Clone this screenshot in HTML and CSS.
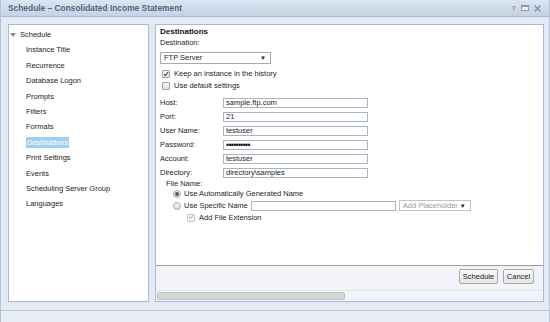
FILE: index.html
```html
<!DOCTYPE html>
<html lang="en">
<head>
    <meta charset="UTF-8">
    <title>Schedule</title>
    <link rel="stylesheet" href="styles.css">
</head>
<body>
    <div class="window">
        <div class="titlebar">
            <span class="title">Schedule &ndash; Consolidated Income Statement</span>
            <div class="tools">
                <span class="tool help">?</span>
                <span class="tool min"></span>
                <svg class="tool close" width="7" height="7" viewBox="0 0 7 7">
                    <path d="M0.5 0.5 L6.5 6.5 M6.5 0.5 L0.5 6.5" stroke="#8e9aab" stroke-width="1.6"/>
                </svg>
            </div>
        </div>

        <div class="main">
            <div class="nav">
                <div class="nav-root"><span class="caret"></span>Schedule</div>
                <ul class="nav-list">
                    <li>Instance Title</li>
                    <li>Recurrence</li>
                    <li>Database Logon</li>
                    <li>Prompts</li>
                    <li>Filters</li>
                    <li>Formats</li>
                    <li><span class="selected">Destinations</span></li>
                    <li>Print Settings</li>
                    <li>Events</li>
                    <li>Scheduling Server Group</li>
                    <li>Languages</li>
                </ul>
            </div>

            <div class="panel">
                <div class="content">
                    <div class="heading">Destinations</div>
                    <div class="line">Destination:</div>
                    <div class="select wide">
                        <span>FTP Server</span>
                        <span class="arrow">&#9660;</span>
                    </div>

                    <div class="check-row first">
                        <span class="box checked">
                            <svg width="8" height="8" viewBox="0 0 8 8"><path d="M1.5 4 L3.2 6 L6.8 1.5" fill="none" stroke="#444" stroke-width="1.4"/></svg>
                        </span>
                        Keep an instance in the history
                    </div>
                    <div class="check-row">
                        <span class="box"></span>
                        Use default settings
                    </div>

                    <div class="fields">
                        <label>Host:</label><div class="input">sample.ftp.com</div>
                        <label>Port:</label><div class="input">21</div>
                        <label>User Name:</label><div class="input">testuser</div>
                        <label>Password:</label><div class="input dots">&bull;&bull;&bull;&bull;&bull;&bull;&bull;&bull;&bull;&bull;</div>
                        <label>Account:</label><div class="input">testuser</div>
                        <label>Directory:</label><div class="input">directory\samples</div>
                    </div>

                    <div class="file-name">
                        <div class="file-label">File Name:</div>
                        <div class="radio-row auto">
                            <span class="radio on"></span>
                            Use Automatically Generated Name
                        </div>
                        <div class="radio-row specific">
                            <span class="radio"></span>
                            Use Specific Name
                            <div class="input name-input"></div>
                            <div class="select placeholder">
                                <span>Add Placeholder</span>
                                <span class="arrow">&#9660;</span>
                            </div>
                        </div>
                        <div class="check-row ext">
                            <span class="box disabled">
                                <svg width="8" height="8" viewBox="0 0 8 8"><path d="M1.5 4 L3.2 6 L6.8 1.5" fill="none" stroke="#a8a8a8" stroke-width="1.3"/></svg>
                            </span>
                            Add File Extension
                        </div>
                    </div>
                </div>

                <div class="footer">
                    <button class="btn schedule">Schedule</button>
                    <button class="btn cancel">Cancel</button>
                </div>

                <div class="hscroll">
                    <div class="thumb"></div>
                </div>
            </div>
        </div>

        <div class="status">
            <span class="grip"></span>
        </div>
    </div>
</body>
</html>
```

FILE: styles.css
```css
* {
    box-sizing: border-box;
}

body {
    margin: 0;
    font-family: 'Liberation Sans', Arial, sans-serif;
    font-size: 7.5px;
    color: #1e1e1e;
    background: #e4eaf4;
}

.window {
    width: 550px;
    height: 322px;
    display: flex;
    flex-direction: column;
    background: #e4eaf4;
    border-left: 1px solid #b3c2d8;
    border-right: 1px solid #b3c2d8;
}

/* title bar */
.titlebar {
    height: 17px;
    display: flex;
    align-items: center;
    justify-content: space-between;
    padding: 0 8px 0 7px;
    background: linear-gradient(to bottom, #dde5f0, #c4d2e4);
    border-bottom: 1px solid #a9b9d0;
}

.title {
    font-weight: bold;
    font-size: 8.4px;
    color: #56667b;
}

.tools {
    display: flex;
    align-items: center;
    gap: 5px;
}

.tool.help {
    font-size: 8px;
    font-weight: bold;
    color: #8e9aab;
}

.tool.min {
    width: 8px;
    height: 6px;
    border: 1px solid #8e9aab;
    border-top-width: 2px;
    background: #eef2f7;
}

/* main area */
.main {
    flex: 1;
    display: flex;
    gap: 6px;
    padding: 7px 5px 8px 7px;
}

.nav {
    width: 141px;
    background: #fff;
    border: 1px solid #a8bad3;
    padding-top: 2px;
    line-height: 15.4px;
}

.nav-root {
    display: flex;
    align-items: center;
    padding-left: 1px;
}

.caret {
    width: 0;
    height: 0;
    border-left: 3px solid transparent;
    border-right: 3px solid transparent;
    border-top: 4px solid #8c8c8c;
    margin-right: 4px;
}

.nav-list {
    list-style: none;
    margin: 0;
    padding: 0 0 0 17px;
}

.selected {
    display: inline-block;
    line-height: 11px;
    padding: 0 1px;
    background: #9fcff2;
    color: #fff;
}

/* right panel */
.panel {
    flex: 1;
    display: flex;
    flex-direction: column;
    border: 1px solid #a8bad3;
    background: #fff;
}

.content {
    height: 240px;
    padding: 2px 0 0 4px;
    line-height: 10px;
}

.heading {
    font-weight: bold;
    font-size: 8px;
    color: #111;
}

.line {
    margin-top: 1px;
}

.select {
    display: flex;
    align-items: center;
    justify-content: space-between;
    height: 12px;
    border: 1px solid #a9a9a9;
    padding: 0 4px 0 3px;
    background: #fff;
}

.select.wide {
    width: 111px;
    margin-top: 4px;
}

.arrow {
    font-size: 6px;
    color: #222;
}

.check-row {
    display: flex;
    align-items: center;
    height: 12px;
    padding-left: 2px;
}

.check-row.first {
    margin-top: 4px;
}

.box {
    width: 8px;
    height: 8px;
    margin-right: 4px;
    border: 1px solid #9aa3ae;
    border-radius: 1px;
    background: linear-gradient(to bottom, #f4f4f4, #dedede);
    display: flex;
    align-items: center;
    justify-content: center;
}

.box svg {
    margin-top: -1px;
}

.box.disabled {
    border-color: #c8c8c8;
    background: #f4f4f4;
}

.fields {
    display: grid;
    grid-template-columns: 63px 145px;
    grid-auto-rows: 10px;
    row-gap: 4px;
    margin-top: 6px;
}

.fields label {
    line-height: 10px;
}

.input {
    height: 10px;
    border: 1px solid #a9b3c1;
    padding-left: 2px;
    line-height: 8px;
    background: #fff;
}

.input.dots {
    font-size: 8.5px;
    letter-spacing: -0.6px;
    color: #111;
}

.file-name {
    padding-left: 6px;
}

.file-label {
    height: 11px;
    line-height: 12px;
}

.radio-row {
    display: flex;
    align-items: center;
    padding-left: 7px;
}

.radio-row.auto {
    height: 10px;
}

.radio-row.specific {
    height: 13px;
}

.radio {
    width: 8px;
    height: 8px;
    margin-right: 3px;
    border-radius: 50%;
    border: 1px solid #a0a8b3;
    background: linear-gradient(to bottom, #f7f7f7, #dcdcdc);
    display: flex;
    align-items: center;
    justify-content: center;
}

.radio.on::after {
    content: "";
    width: 4px;
    height: 4px;
    border-radius: 50%;
    background: #555;
}

.name-input {
    width: 145px;
    margin-left: 3px;
}

.select.placeholder {
    width: 72px;
    height: 11px;
    margin-left: 3px;
    color: #9a9a9a;
    border-color: #c4c4c4;
}

.check-row.ext {
    height: 11px;
    padding-left: 21px;
}

.footer {
    height: 25px;
    border-top: 1px solid #9d9d9d;
    background: #f2f3f8;
    display: flex;
    justify-content: flex-end;
    align-items: flex-start;
    gap: 5px;
    padding: 3px 9px 0 0;
}

.btn {
    height: 15px;
    padding: 0;
    font-family: inherit;
    font-size: 7.5px;
    color: #222;
    border: 1px solid #a7a7a7;
    border-radius: 2px;
    background: linear-gradient(to bottom, #fbfbfb, #e4e4e4);
}

.btn.schedule {
    width: 39px;
}

.btn.cancel {
    width: 31px;
}

.hscroll {
    height: 11px;
    border-top: 1px solid #e2e4ea;
    background: #f2f3f8;
    padding: 1px 0 0 1px;
}

.thumb {
    width: 188px;
    height: 8px;
    border: 1px solid #c2c2c2;
    border-radius: 2px;
    background: #d6d6d6;
}

/* bottom strip */
.status {
    height: 12px;
    border-top: 1px solid #b8c6db;
    background: #e8edf5;
    display: flex;
    justify-content: flex-end;
    align-items: flex-end;
    padding: 0 1px 1px 0;
}

.grip {
    width: 5px;
    height: 5px;
    background: radial-gradient(circle, #b6bfcc 35%, transparent 40%) 0 0 / 2px 2px;
}
```
